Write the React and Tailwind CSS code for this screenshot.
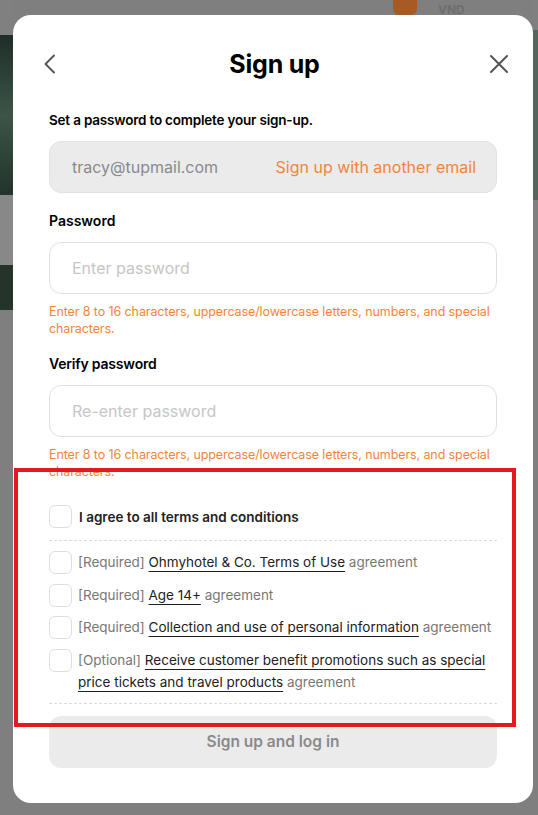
import React from "react";

function Check() {
  return <span className="h-[23px] w-[23px] shrink-0 rounded-[6px] border border-[#dedede] bg-white" />;
}

function Row({ tag, link }) {
  return (
    <div className="flex items-start gap-[6px]">
      <Check />
      <p className="text-[13.5px] leading-[22px] text-[#777]">
        {tag} <span className="text-[#222] underline decoration-[#222] underline-offset-[4px]">{link}</span> agreement
      </p>
    </div>
  );
}

export default function App() {
  return (
    <div
      className="relative h-[815px] w-[538px] overflow-hidden bg-[#7f7f7f]"
      style={{ fontFamily: "Inter, 'Noto Sans', sans-serif" }}
    >
      {/* dimmed page behind */}
      <div className="flex h-full">
        <div className="flex w-[13px] flex-col">
          <div className="h-[35px] bg-[#808080]" />
          <div className="h-[160px] bg-gradient-to-b from-[#1f2e28] via-[#3c5548] to-[#22332b]" />
          <div className="h-[70px] bg-[#888]" />
          <div className="h-[45px] bg-[#24342b]" />
          <div className="flex-1 bg-[#7f7f7f]" />
        </div>
        <div className="flex-1" />
        <div className="flex w-[5px] flex-col">
          <div className="h-[30px] bg-[#808080]" />
          <div className="h-[170px] bg-[#52665a]" />
          <div className="flex-1 bg-[#7f7f7f]" />
        </div>
      </div>
      <div className="absolute left-[393px] top-[-8px] h-[23px] w-[24px] rounded-[6px] bg-[#a85a25]" />
      <div className="absolute left-[438px] top-[1px] text-[12px] font-bold text-[#6e6e6e]">VND</div>

      {/* modal */}
      <div className="absolute left-[13px] top-[15px] flex h-[788px] w-[520px] flex-col rounded-[18px] bg-white px-[36px] pt-[29px] text-[#111]">
        <div className="flex h-[42px] items-center justify-between">
          <svg width="20" height="20" viewBox="0 0 20 20" className="-ml-[8px] -mt-[2px]">
            <path d="M13 1.5 L4.5 10 L13 18.5" fill="none" stroke="#555" strokeWidth="2" strokeLinecap="round" strokeLinejoin="round" />
          </svg>
          <h1 className="text-[25px] font-bold tracking-[-0.2px] text-black">Sign up</h1>
          <svg width="22" height="22" viewBox="0 0 22 22" className="-mr-[13px] -mt-[2px]">
            <path d="M3 3 L19 19 M19 3 L3 19" fill="none" stroke="#555" strokeWidth="2" strokeLinecap="round" />
          </svg>
        </div>

        <p className="mt-[24px] text-[13.5px] font-semibold leading-[20px] tracking-[-0.2px] text-black">
          Set a password to complete your sign-up.
        </p>
        <div className="mt-[11px] flex h-[52px] items-center justify-between rounded-[12px] border border-[#e2e2e2] bg-[#ebebeb] pl-[22px] pr-[20px]">
          <span className="text-[16px] text-[#8a8a8a]">tracy@tupmail.com</span>
          <span className="text-[16px] text-[#f5843a]">Sign up with another email</span>
        </div>

        <p className="mt-[18px] text-[14px] font-semibold leading-[20px] text-black">Password</p>
        <div className="mt-[11px] flex h-[52px] items-center rounded-[12px] border border-[#e0e0e0] pl-[22px]">
          <span className="text-[16px] text-[#c6c6c6]">Enter password</span>
        </div>
        <p className="mt-[9px] text-[12.5px] leading-[17px] tracking-[-0.1px] text-[#f5843a]">
          Enter 8 to 16 characters, uppercase/lowercase letters, numbers, and special characters.
        </p>

        <p className="mt-[17px] text-[14px] font-semibold leading-[20px] tracking-[-0.2px] text-black">Verify password</p>
        <div className="mt-[11px] flex h-[52px] items-center rounded-[12px] border border-[#e0e0e0] pl-[22px]">
          <span className="text-[16px] text-[#c6c6c6]">Re-enter password</span>
        </div>
        <p className="mt-[9px] text-[12.5px] leading-[17px] tracking-[-0.1px] text-[#f5843a]">
          Enter 8 to 16 characters, uppercase/lowercase letters, numbers, and special characters.
        </p>

        <div className="mt-[25px] flex items-center gap-[7px]">
          <Check />
          <span className="pt-[2px] text-[13.5px] font-semibold text-[#222]">I agree to all terms and conditions</span>
        </div>
        <div className="mt-[12px] border-t border-dashed border-[#dcdcdc]" />
        <div className="mt-[10px] flex flex-col gap-[9.5px]">
          <Row tag="[Required]" link="Ohmyhotel & Co. Terms of Use" />
          <Row tag="[Required]" link="Age 14+" />
          <Row tag="[Required]" link="Collection and use of personal information" />
          <Row tag="[Optional]" link="Receive customer benefit promotions such as special price tickets and travel products" />
        </div>
        <div className="mt-[10px] border-t border-dashed border-[#dcdcdc]" />
        <button className="mt-[12px] flex h-[52px] items-center justify-center rounded-[12px] bg-[#ebebeb] text-[15.5px] font-semibold text-[#8a8a8a]">
          Sign up and log in
        </button>
      </div>

      {/* annotation */}
      <div className="pointer-events-none absolute left-[14px] top-[468px] h-[259px] w-[502px] border-[4px] border-[#e4181f]" />
    </div>
  );
}
